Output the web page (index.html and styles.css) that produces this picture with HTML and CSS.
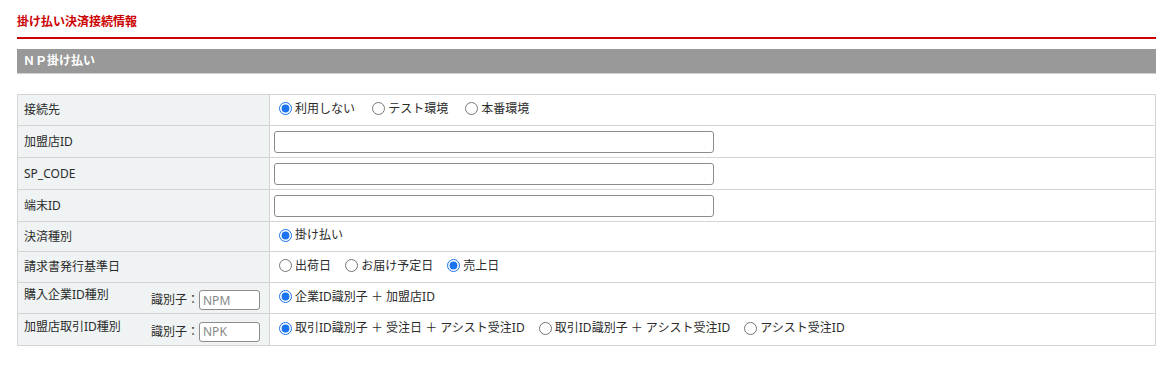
FILE: index.html
```html
<!DOCTYPE html>
<html lang="ja">
<head>
    <meta charset="UTF-8">
    <title>掛け払い決済接続情報</title>
    <link rel="stylesheet" href="styles.css">
</head>
<body>
    <h2 class="page-title">掛け払い決済接続情報</h2>

    <div class="section-bar">ＮＰ掛け払い</div>

    <table class="settings">
        <colgroup>
            <col class="col-label">
            <col>
        </colgroup>
        <tr>
            <th>接続先</th>
            <td>
                <label class="opt wide"><input type="radio" name="env" checked>利用しない</label>
                <label class="opt wide"><input type="radio" name="env">テスト環境</label>
                <label class="opt wide"><input type="radio" name="env">本番環境</label>
            </td>
        </tr>
        <tr class="input-row">
            <th>加盟店ID</th>
            <td><input type="text" class="text-field"></td>
        </tr>
        <tr class="input-row">
            <th>SP_CODE</th>
            <td><input type="text" class="text-field"></td>
        </tr>
        <tr class="input-row">
            <th>端末ID</th>
            <td><input type="text" class="text-field"></td>
        </tr>
        <tr class="short-row">
            <th>決済種別</th>
            <td>
                <label class="opt"><input type="radio" name="kind" checked>掛け払い</label>
            </td>
        </tr>
        <tr>
            <th>請求書発行基準日</th>
            <td>
                <label class="opt"><input type="radio" name="base">出荷日</label>
                <label class="opt"><input type="radio" name="base">お届け予定日</label>
                <label class="opt"><input type="radio" name="base" checked>売上日</label>
            </td>
        </tr>
        <tr>
            <th>
                <div class="split">
                    <span class="split-label">購入企業ID種別</span>
                    <span class="ident">識別子：<input type="text" class="ident-field" value="NPM"></span>
                </div>
            </th>
            <td>
                <label class="opt"><input type="radio" name="buyer" checked>企業ID識別子 ＋ 加盟店ID</label>
            </td>
        </tr>
        <tr class="input-row">
            <th>
                <div class="split">
                    <span class="split-label">加盟店取引ID種別</span>
                    <span class="ident">識別子：<input type="text" class="ident-field" value="NPK"></span>
                </div>
            </th>
            <td>
                <label class="opt"><input type="radio" name="trade" checked>取引ID識別子 ＋ 受注日 ＋ アシスト受注ID</label>
                <label class="opt"><input type="radio" name="trade">取引ID識別子 ＋ アシスト受注ID</label>
                <label class="opt"><input type="radio" name="trade">アシスト受注ID</label>
            </td>
        </tr>
    </table>
</body>
</html>
```

FILE: styles.css
```css
body {
    margin: 0;
    padding: 14px 19px 0 17px;
    font-family: "Noto Sans", "Noto Sans CJK JP", sans-serif;
    font-size: 12px;
    line-height: 16px;
    color: #2b2b2b;
    background-color: #fff;
}
.page-title {
    margin: 0;
    font-size: 12px;
    line-height: 16px;
    font-weight: bold;
    color: #cc0000;
    padding-bottom: 7px;
    border-bottom: 2px solid #cc0000;
}
.section-bar {
    margin-top: 10px;
    height: 24px;
    line-height: 24px;
    padding-left: 6px;
    background-color: #999;
    border-bottom: 1px solid #cfcfcf;
    color: #fff;
    font-weight: bold;
}
.settings {
    margin-top: 20px;
    width: 100%;
    border-collapse: collapse;
    table-layout: fixed;
}
.col-label {
    width: 252px;
}
.settings th,
.settings td {
    border: 1px solid #d4d4d4;
    height: 30px;
    padding: 0 4px;
    vertical-align: middle;
    text-align: left;
}
.settings th {
    padding-left: 6px;
    padding-right: 9px;
    font-weight: normal;
    background-color: #eff3f3;
}
.settings tr.input-row th,
.settings tr.input-row td {
    height: 31px;
}
.settings tr.short-row th,
.settings tr.short-row td {
    height: 29px;
}
.opt {
    display: inline-flex;
    align-items: center;
    margin-right: 6px;
    white-space: nowrap;
}
.opt.wide {
    margin-right: 9px;
}
.opt input[type="radio"] {
    width: 13px;
    height: 13px;
    margin: 0 3px 0 5px;
    accent-color: #1a73f0;
}
.text-field {
    box-sizing: border-box;
    width: 440px;
    height: 22px;
    margin: 0;
    border: 1px solid #8c8c8c;
    border-radius: 3px;
    padding: 0 4px;
    font: inherit;
}
.split {
    display: flex;
    justify-content: space-between;
    align-items: center;
}
.split-label {
    align-self: flex-start;
    padding-top: 1px;
}
.ident {
    display: inline-flex;
    align-items: center;
    margin-top: 4px;
}
.ident-field {
    box-sizing: border-box;
    width: 61px;
    height: 20px;
    margin: 0;
    border: 1px solid #8c8c8c;
    border-radius: 3px;
    padding: 0 3px;
    font: inherit;
    color: #888;
}
```
